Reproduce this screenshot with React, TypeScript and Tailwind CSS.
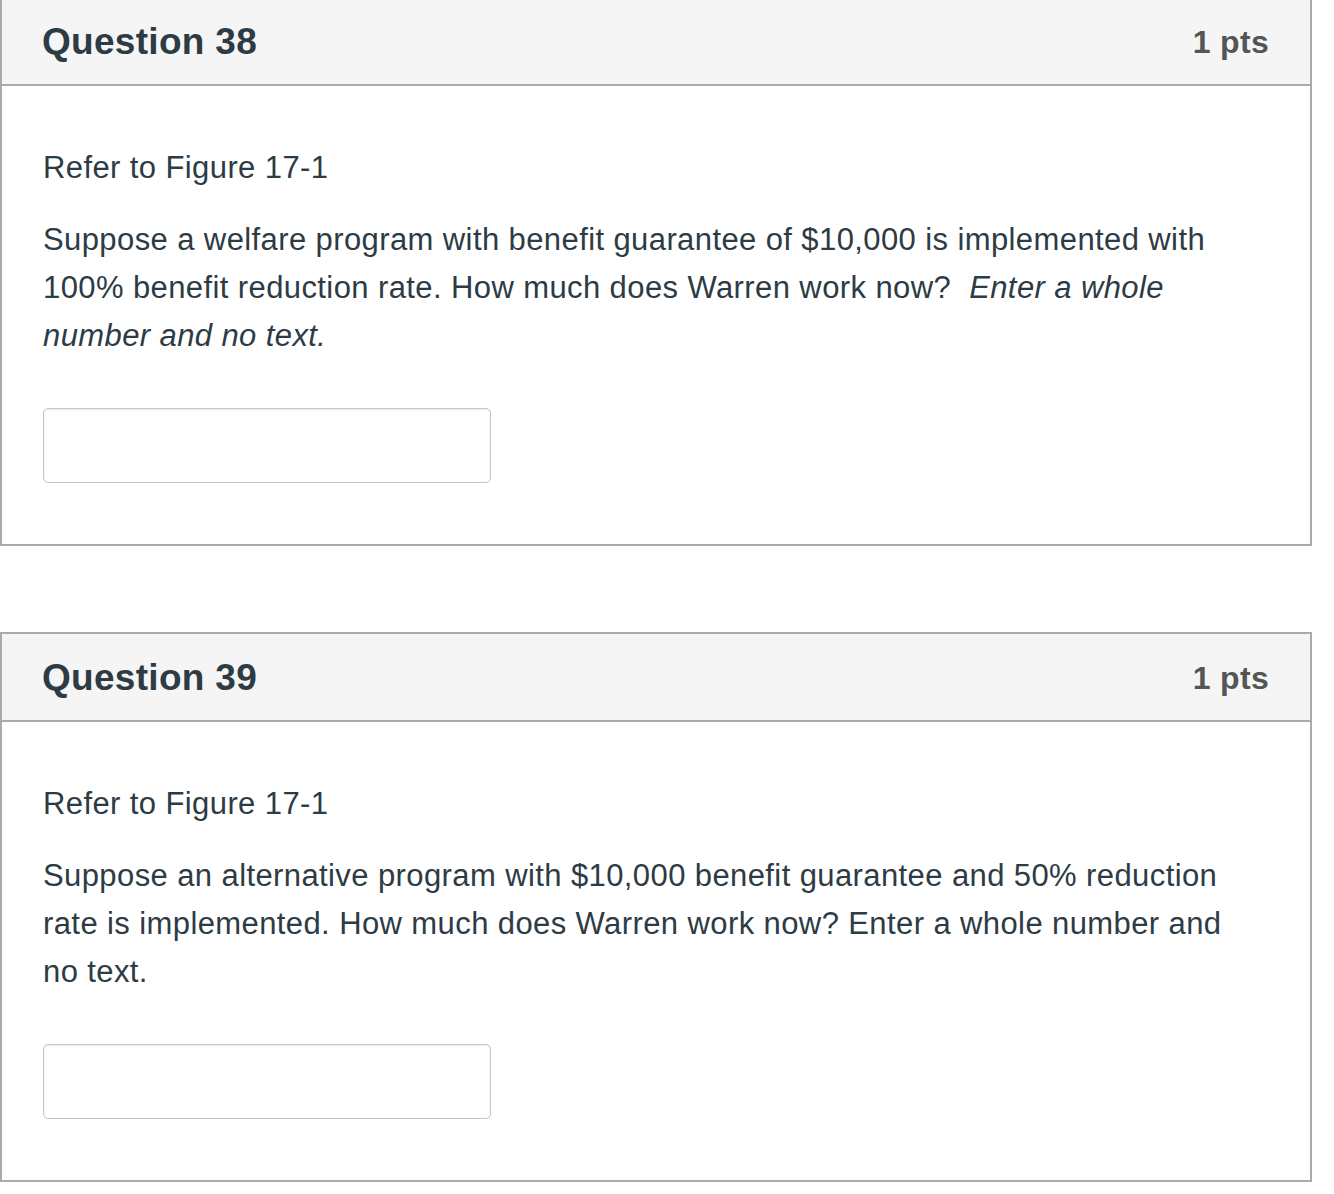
import React from "react";

function QuestionCard({
  title,
  points,
  children,
  className = "",
}: {
  title: string;
  points: string;
  children: React.ReactNode;
  className?: string;
}) {
  return (
    <div className={`w-[1312px] border-2 border-[#aaaaaa] bg-white ${className}`}>
      <div className="flex h-[88px] items-center justify-between border-b-2 border-[#aaaaaa] bg-[#f5f5f5] pl-[40px] pr-[41px] pt-[2px]">
        <h2 className="text-[37px] font-bold tracking-[0.3px] text-[#2d3b45]">{title}</h2>
        <span className="text-[32px] font-bold tracking-[0.3px] text-[#555555]">{points}</span>
      </div>
      <div className="pl-[41px] pr-[72px] pt-[58px] pb-[61px] text-[31px] leading-[48px] tracking-[0.4px] text-[#2d3b45]">
        {children}
        <input
          type="text"
          className="mt-[48px] block h-[75px] w-[448px] rounded-[5px] border-[1.5px] border-[#c4c4c4] bg-white shadow-[inset_0_1px_2px_rgba(0,0,0,0.08)] outline-none"
        />
      </div>
    </div>
  );
}

export default function App() {
  return (
    <div
      className="min-h-[1194px] bg-white"
      style={{ fontFamily: '"Liberation Sans", Arial, sans-serif' }}
    >
      <QuestionCard title="Question 38" points="1 pts" className="-mt-[4px]">
        <p>Refer to Figure 17-1</p>
        <p className="mt-[24px]">
          Suppose a welfare program with benefit guarantee of $10,000 is implemented with
          100% benefit reduction rate. How much does Warren work now?&nbsp;{" "}
          <em>Enter a whole number and no text.</em>
        </p>
      </QuestionCard>
      <QuestionCard title="Question 39" points="1 pts" className="mt-[86px]">
        <p>Refer to Figure 17-1</p>
        <p className="mt-[24px]">
          Suppose an alternative program with $10,000 benefit guarantee and 50% reduction
          rate is implemented. How much does Warren work now? Enter a whole number and no
          text.
        </p>
      </QuestionCard>
    </div>
  );
}
